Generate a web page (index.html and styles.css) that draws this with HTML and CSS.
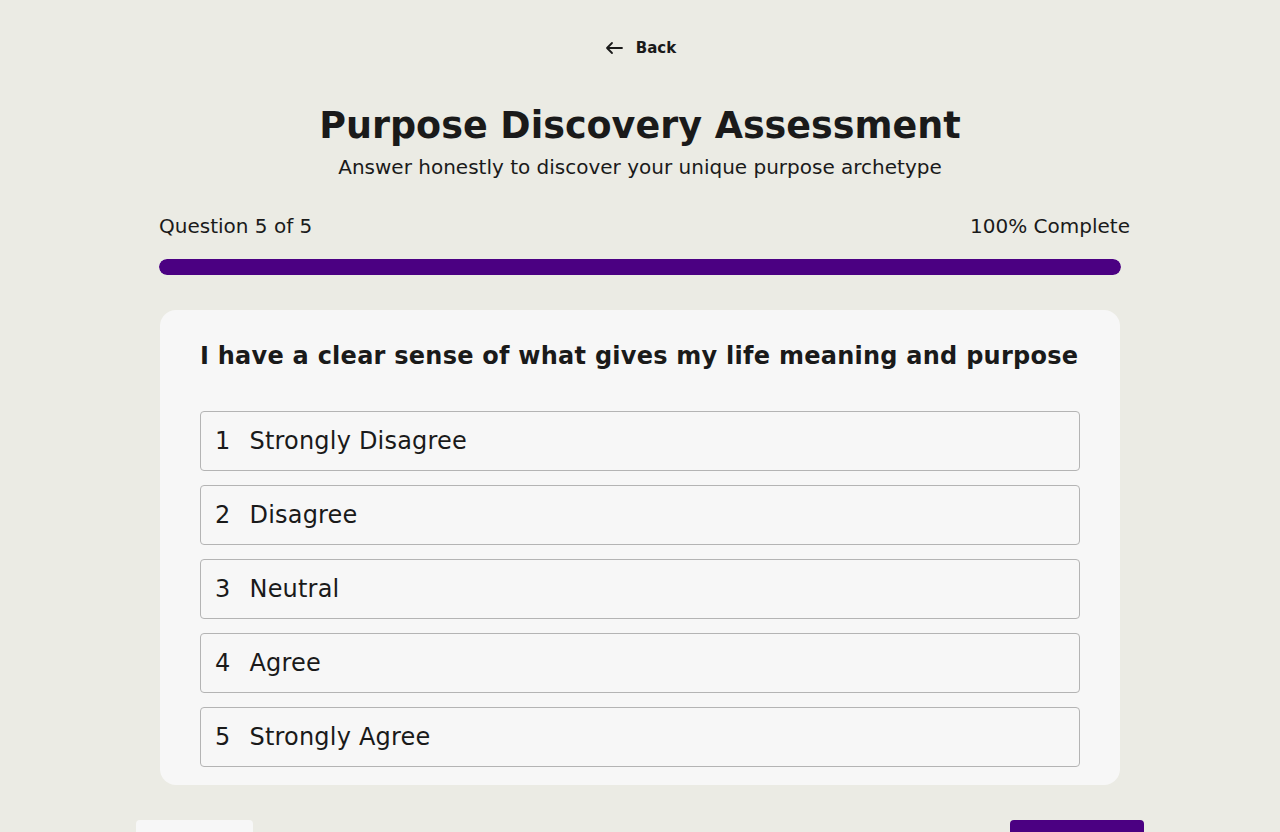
FILE: index.html
```html
<!DOCTYPE html>
<html lang="en">
<head>
<meta charset="utf-8">
<title>Purpose Discovery Assessment</title>
<link rel="stylesheet" href="styles.css">
</head>
<body>
<div class="page">
  <a class="back" href="#">
    <svg class="back-icon" width="20" height="20" viewBox="0 0 20 20" fill="none" stroke="currentColor" stroke-width="1.8" stroke-linecap="round" stroke-linejoin="round"><path d="M18 10H3M8 5l-5 5 5 5"/></svg>
    <span>Back</span>
  </a>
  <header class="head">
    <h1 class="title">Purpose Discovery Assessment</h1>
    <p class="subtitle">Answer honestly to discover your unique purpose archetype</p>
  </header>
  <section class="progress">
    <div class="progress-labels">
      <span>Question 5 of 5</span>
      <span>100% Complete</span>
    </div>
    <div class="progress-track"><div class="progress-fill" style="width:100%"></div></div>
  </section>
  <section class="card">
    <h2 class="question">I have a clear sense of what gives my life meaning and purpose</h2>
    <div class="options">
      <button class="option"><span class="num">1</span><span class="label">Strongly Disagree</span></button>
      <button class="option"><span class="num">2</span><span class="label">Disagree</span></button>
      <button class="option"><span class="num">3</span><span class="label">Neutral</span></button>
      <button class="option"><span class="num">4</span><span class="label">Agree</span></button>
      <button class="option"><span class="num">5</span><span class="label">Strongly Agree</span></button>
    </div>
  </section>
  <nav class="nav">
    <button class="btn btn-prev">Previous</button>
    <button class="btn btn-next">Submit</button>
  </nav>
</div>
</body>
</html>
```

FILE: styles.css
```css
* { box-sizing: border-box; }
html, body { margin: 0; padding: 0; }
body {
  background: #ebebe4;
  color: #1a1a1a;
  font-family: "DejaVu Sans", Inter, sans-serif;
}
.page {
  display: flex;
  flex-direction: column;
  align-items: center;
  padding-top: 36px;
}
.back {
  display: flex;
  align-items: center;
  gap: 12px;
  color: #1a1a1a;
  text-decoration: none;
  font-size: 15px;
  font-weight: 600;
  height: 22px;
  margin-top: 1px;
}
.back-icon { display: block; }
.head {
  margin-top: 43px;
  text-align: center;
}
.title {
  margin: 0;
  font-size: 36.5px;
  line-height: 48px;
  font-weight: 600;
}
.subtitle {
  margin: 4px 0 0;
  font-size: 20px;
  line-height: 26px;
  font-weight: 400;
}
.progress {
  width: 962px;
  margin-top: 33px;
}
.progress-labels {
  display: flex;
  justify-content: space-between;
  margin-right: -9px;
  font-size: 20px;
  line-height: 26px;
}
.progress-track {
  margin-top: 20px;
  height: 16px;
  border-radius: 8px;
  background: #d8d4e0;
  overflow: hidden;
}
.progress-fill {
  height: 100%;
  background: #4b0082;
  border-radius: 8px;
}
.card {
  width: 960px;
  margin-top: 35px;
  background: #f7f7f7;
  border-radius: 16px;
  padding: 30px 40px 18px;
}
.question {
  margin: 0;
  font-size: 24px;
  letter-spacing: 0.25px;
  line-height: 32px;
  font-weight: 600;
  white-space: nowrap;
}
.options {
  margin-top: 39px;
  display: flex;
  flex-direction: column;
  gap: 14px;
}
.option {
  display: flex;
  align-items: center;
  height: 60px;
  padding: 0 14px;
  background: #f7f7f7;
  border: 1px solid #b4b4b4;
  border-radius: 4px;
  font-family: inherit;
  font-size: 24px;
  letter-spacing: 0.2px;
  color: #1a1a1a;
  text-align: left;
  cursor: pointer;
}
.num { margin-right: 19px; }
.nav {
  width: 1008px;
  margin-top: 35px;
  display: flex;
  justify-content: space-between;
}
.btn {
  height: 64px;
  border: none;
  border-radius: 4px;
  font-family: inherit;
  font-size: 16px;
  font-weight: 600;
}
.btn-prev { width: 117px; background: #f7f7f7; color: #1a1a1a; }
.btn-next { width: 134px; background: #4b0082; color: #fff; }
```
